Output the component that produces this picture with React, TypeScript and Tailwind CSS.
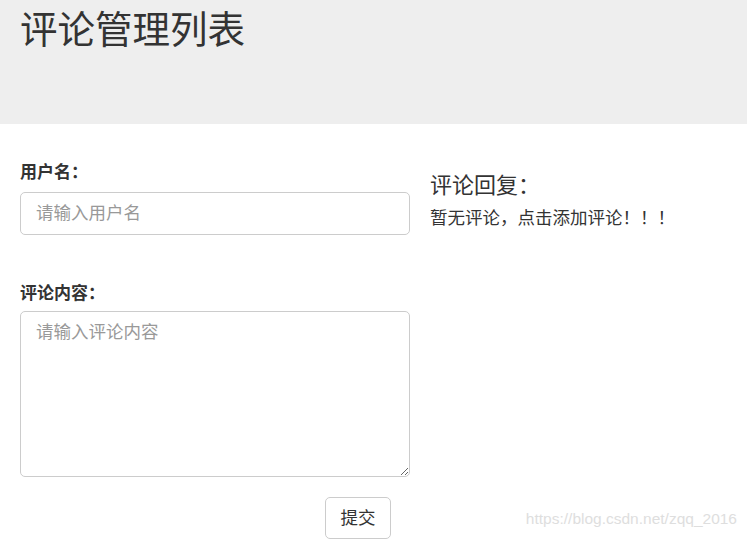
export default function App() {
  return (
    <div
      className="relative h-[544px] w-[747px] overflow-hidden bg-white text-[#333]"
      style={{ fontFamily: '"Liberation Sans", "Noto Sans CJK SC", sans-serif' }}
    >
      {/* jumbotron */}
      <div className="h-[124px] bg-[#eeeeee] pl-[20px] pt-[9px]">
        <h1 className="text-[37.5px] font-normal leading-[42px]">评论管理列表</h1>
      </div>

      <div className="flex pl-[20px]">
        {/* 左侧表单 */}
        <form className="w-[390px] pt-[37px]" onSubmit={(e) => e.preventDefault()}>
          <label className="mb-[7px] block text-[17px] font-bold leading-[24px]">用户名：</label>
          <input
            type="text"
            placeholder="请输入用户名"
            className="block h-[43px] w-full rounded-[5px] border border-[#ccc] px-[15px] text-[17.5px] placeholder:text-[#999] focus:outline-none"
          />
          <label className="mb-[5px] mt-[47px] block text-[17px] font-bold leading-[24px]">评论内容：</label>
          <textarea
            placeholder="请输入评论内容"
            className="block h-[166px] w-full rounded-[5px] border border-[#ccc] px-[15px] py-[8px] text-[17.5px] leading-[24px] placeholder:text-[#999] focus:outline-none"
          />
          <button
            type="submit"
            className="ml-[305px] mt-[20px] h-[42px] w-[66px] rounded-[5px] border border-[#ccc] bg-white text-[17.5px]"
          >
            提交
          </button>
        </form>

        {/* 右侧回复 */}
        <div className="ml-[20px] pt-[47px]">
          <h4 className="text-[22px] font-normal leading-[30px]">评论回复：</h4>
          <p className="mt-[5px] text-[17.5px] leading-[25px]">暂无评论，点击添加评论！！！</p>
        </div>
      </div>

      {/* 水印 */}
      <span className="absolute bottom-[14px] right-[10px] text-[15.5px] text-[#dedede]">
        https://blog.csdn.net/zqq_2016
      </span>
    </div>
  );
}
